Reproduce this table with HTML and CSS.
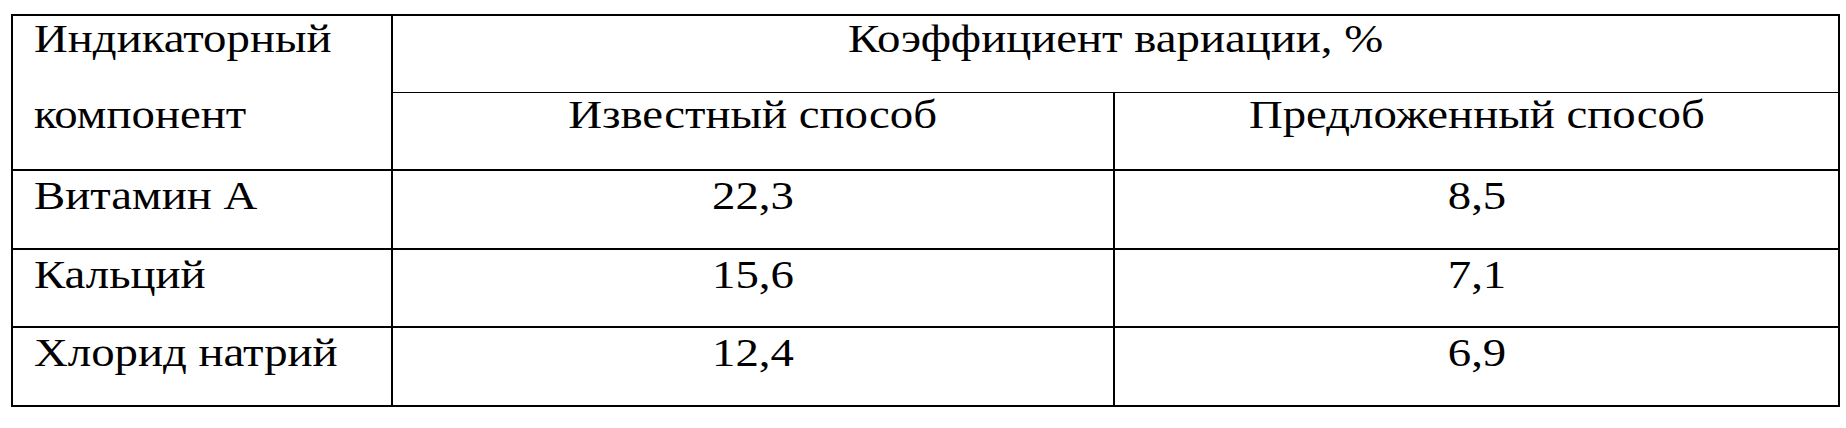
FILE: index.html
```html
<!DOCTYPE html>
<html lang="ru">
<head>
<meta charset="utf-8">
<title>Коэффициент вариации</title>
<link rel="stylesheet" href="styles.css">
</head>
<body class="page">
<table class="data-table">
  <colgroup>
    <col class="col-name">
    <col class="col-known">
    <col class="col-proposed">
  </colgroup>
  <thead>
    <tr class="row row-h1">
      <th class="cell cell-left cell-stack" rowspan="2">
        <div class="stack">
          <span class="txt">Индикаторный</span>
          <span class="txt">компонент</span>
        </div>
      </th>
      <th class="cell cell-center cell-group" colspan="2"><span class="txt">Коэффициент вариации, %</span></th>
    </tr>
    <tr class="row row-h2">
      <th class="cell cell-center cell-sub"><span class="txt">Известный способ</span></th>
      <th class="cell cell-center cell-sub"><span class="txt">Предложенный способ</span></th>
    </tr>
  </thead>
  <tbody>
    <tr class="row row-b1">
      <td class="cell cell-left"><span class="txt">Витамин А</span></td>
      <td class="cell cell-center"><span class="txt">22,3</span></td>
      <td class="cell cell-center"><span class="txt">8,5</span></td>
    </tr>
    <tr class="row row-b2">
      <td class="cell cell-left"><span class="txt">Кальций</span></td>
      <td class="cell cell-center"><span class="txt">15,6</span></td>
      <td class="cell cell-center"><span class="txt">7,1</span></td>
    </tr>
    <tr class="row row-b3">
      <td class="cell cell-left"><span class="txt">Хлорид натрий</span></td>
      <td class="cell cell-center"><span class="txt">12,4</span></td>
      <td class="cell cell-center"><span class="txt">6,9</span></td>
    </tr>
  </tbody>
</table>
</body>
</html>
```

FILE: styles.css
```css
.page {
  margin: 0;
  padding: 14px 0 0 11px;
  background: #ffffff;
  color: #000000;
  font-family: "Liberation Serif";
}

.data-table {
  border-collapse: collapse;
  table-layout: fixed;
  width: 1827px;
  border: 2px solid #000000;
  font-family: "Liberation Serif";
  font-size: 40px;
}

.col-name { width: 380px; }
.col-known { width: 722px; }
.col-proposed { width: 725px; }

.row-h1 { height: 77px; }
.row-h2 { height: 78px; }
.row-b1 { height: 79px; }
.row-b2 { height: 78px; }
.row-b3 { height: 79px; }

.cell {
  border: 2px solid #000000;
  padding: 3px 0 0 0;
  vertical-align: top;
  line-height: 44px;
  font-weight: normal;
  white-space: nowrap;
  font-family: "Liberation Serif";
}

.txt {
  display: inline-block;
  font-family: "Liberation Serif";
  transform: scaleX(1.17);
  transform-origin: center center;
}

.cell-left {
  text-align: left;
  padding-left: 21px;
}

.cell-left .txt {
  transform-origin: left center;
}

.cell-center {
  text-align: center;
}

.cell-group {
  border-bottom: 1px solid #000000;
  padding-top: 1px;
}

.cell-sub {
  border-top: 1px solid #000000;
  padding-top: 0;
}

.cell-stack {
  padding-top: 1px;
}

.stack {
  display: flex;
  flex-direction: column;
  align-items: flex-start;
  gap: 32px;
}
```
